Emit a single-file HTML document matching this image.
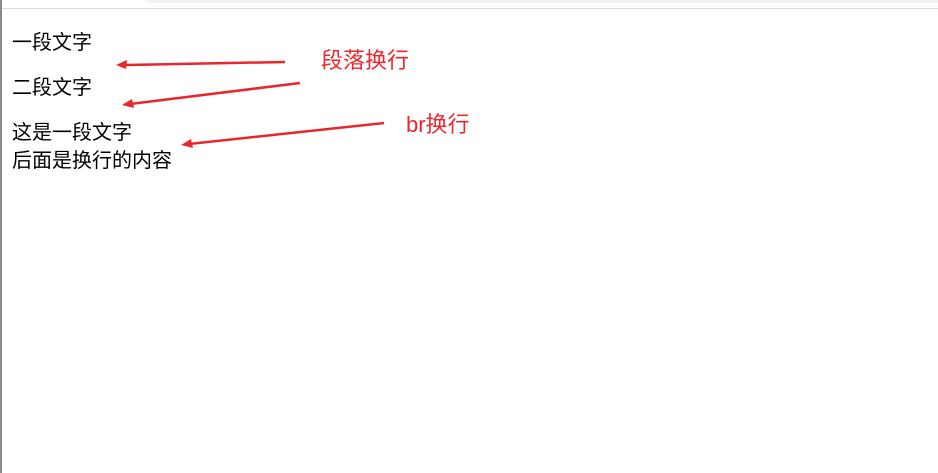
<!DOCTYPE html>
<html><head><meta charset="utf-8"><style>
html,body{margin:0;padding:0;width:938px;height:473px;overflow:hidden;background:#fff;position:relative;font-family:"Liberation Sans","Microsoft YaHei","Noto Sans CJK SC",sans-serif}
.t{position:absolute;left:12px;font-size:20px;color:#000;line-height:22px;white-space:nowrap}
.r{position:absolute;color:#f0262d;font-size:22px;line-height:24px;white-space:nowrap}
</style></head><body>
<div style="position:absolute;left:146px;top:0;width:792px;height:3px;background:#f1f3f4;border-bottom-left-radius:6px"></div>
<div style="position:absolute;left:0;top:8px;width:938px;height:1px;background:#dadce0"></div>
<div style="position:absolute;left:0;top:0;width:2px;height:473px;background:#8a8a8a"></div>
<div class="t" style="top:32px">一段文字</div>
<div class="t" style="top:77px">二段文字</div>
<div class="t" style="top:122px">这是一段文字</div>
<div class="t" style="top:150px">后面是换行的内容</div>
<div class="r" style="left:321px;top:49px">段落换行</div>
<div class="r" style="left:406px;top:113px">br换行</div>
<svg width="938" height="473" style="position:absolute;left:0;top:0">
<g stroke="#e8262d" stroke-width="2.5" fill="#e8262d">
<line x1="285" y1="62" x2="124" y2="65"/>
<polygon points="116,65 127,60 126,69" stroke="none"/>
<line x1="300" y1="83" x2="130" y2="104"/>
<polygon points="122,105 132,99 134,108" stroke="none"/>
<line x1="384" y1="123" x2="189" y2="144"/>
<polygon points="181,145 191,139 193,148" stroke="none"/>
</g></svg>
</body></html>
